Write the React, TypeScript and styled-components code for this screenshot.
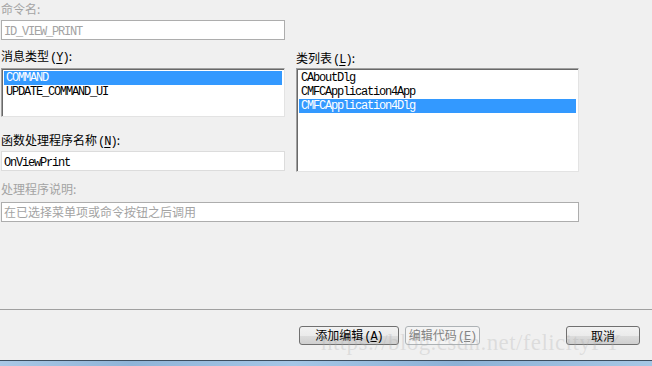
import React from 'react';
import styled, { createGlobalStyle } from 'styled-components';

const GlobalStyle = createGlobalStyle`
  html, body {
    margin: 0;
    padding: 0;
    background: #f0f0f0;
    overflow: hidden;
  }
  #root {
    height: 366px;
  }
`;

const Page = styled.div`
  position: relative;
  height: 366px;
  display: flex;
  flex-direction: column;
  font-family: "Noto Sans CJK SC", "Liberation Sans", sans-serif;
  font-size: 12px;
  color: #000;
`;

const Form = styled.div`
  flex: 1;
  padding-left: 1px;
`;

const Label = styled.div<{ $disabled?: boolean; $top?: number }>`
  height: 18px;
  line-height: 18px;
  margin-top: ${p => p.$top ?? 0}px;
  color: ${p => (p.$disabled ? '#a3a3a3' : '#000')};
  white-space: nowrap;

  u {
    text-decoration: underline;
    text-underline-offset: 2px;
  }
`;

const Mnemonic = styled.span`
  font-family: "Liberation Mono", monospace;
  font-size: 12px;
  letter-spacing: -1px;
  margin-left: 1px;
`;

const Field = styled.div<{ $width: number; $top: number; $disabled?: boolean; $soft?: boolean }>`
  box-sizing: border-box;
  width: ${p => p.$width}px;
  height: 20px;
  margin-top: ${p => p.$top}px;
  background: #fff;
  border: 1px solid ${p => (p.$soft ? '#dcdcdc' : '#adadad')};
  padding-left: 2px;
  line-height: 18px;
  color: ${p => (p.$disabled ? '#a3a3a3' : '#000')};
  white-space: nowrap;
  overflow: hidden;
`;

const MonoText = styled.span`
  font-family: "Liberation Mono", monospace;
  font-size: 12px;
  letter-spacing: -1.2px;
`;

const Columns = styled.div`
  display: grid;
  grid-template-columns: 284px 283px;
  column-gap: 11px;
  align-items: start;
`;

const Column = styled.div`
  display: flex;
  flex-direction: column;
`;

const ListBox = styled.div<{ $height: number; $top: number }>`
  box-sizing: border-box;
  height: ${p => p.$height}px;
  margin-top: ${p => p.$top}px;
  background: #fff;
  border-top: 1px solid #a0a0a0;
  border-left: 1px solid #a0a0a0;
  border-right: 1px solid #e3e3e3;
  border-bottom: 1px solid #e3e3e3;
  box-shadow: inset 1px 1px 0 #696969;
  padding: 2px 2px 1px 2px;
`;

const ListItem = styled.div<{ $selected?: boolean }>`
  height: 14px;
  line-height: 14px;
  padding-left: 2px;
  font-family: "Liberation Mono", monospace;
  font-size: 12px;
  letter-spacing: -1.2px;
  background: ${p => (p.$selected ? '#3399ff' : 'transparent')};
  color: ${p => (p.$selected ? '#fff' : '#000')};
  white-space: nowrap;
`;

const Footer = styled.div`
  border-top: 1px solid #a0a0a0;
  height: 51px;
  box-sizing: border-box;
  display: flex;
  align-items: flex-start;
  gap: 6px;
  padding: 16px 12px 0 299px;
`;

const Button = styled.button<{ $width: number; $push?: boolean }>`
  box-sizing: border-box;
  width: ${p => p.$width}px;
  height: 19px;
  margin-left: ${p => (p.$push ? 'auto' : '0')};
  padding: 0;
  border: 1px solid #707070;
  border-radius: 3px;
  background: linear-gradient(#f2f2f2 0%, #ebebeb 50%, #dddddd 51%, #cfcfcf 100%);
  font-family: "Noto Sans CJK SC", sans-serif;
  font-size: 12px;
  line-height: 16px;
  color: #000;

  &:disabled {
    border-color: #adb2b5;
    background: #f4f4f4;
    color: #838383;
  }
`;

const Taskbar = styled.div`
  height: 6px;
  border-top: 1px solid #3c4e60;
  box-sizing: border-box;
  background: linear-gradient(90deg, #a9c8e6 0%, #8fb4d8 20%, #a4c6e6 45%, #8cb1d6 70%, #a6c7e5 100%);
`;

const Watermark = styled.div`
  position: absolute;
  left: 321px;
  top: 330px;
  font-family: "Liberation Serif", serif;
  font-size: 23px;
  letter-spacing: 0.4px;
  color: rgba(170, 170, 170, 0.28);
  pointer-events: none;
  white-space: nowrap;
`;

const App: React.FC = () => {
  return (
    <Page>
      <GlobalStyle />
      <Form>
        <Label $disabled>命令名:</Label>
        <Field $width={284} $top={2} $disabled>
          <MonoText>ID_VIEW_PRINT</MonoText>
        </Field>
        <Columns>
          <Column>
            <Label $top={7}>
              消息类型<Mnemonic>(<u>Y</u>)</Mnemonic>:
            </Label>
            <ListBox $height={49} $top={3}>
              <ListItem $selected>COMMAND</ListItem>
              <ListItem>UPDATE_COMMAND_UI</ListItem>
            </ListBox>
            <Label $top={14}>
              函数处理程序名称<Mnemonic>(<u>N</u>)</Mnemonic>:
            </Label>
            <Field $width={284} $top={2} $soft>
              <MonoText>OnViewPrint</MonoText>
            </Field>
          </Column>
          <Column>
            <Label $top={9}>
              类列表<Mnemonic>(<u>L</u>)</Mnemonic>:
            </Label>
            <ListBox $height={104} $top={1}>
              <ListItem>CAboutDlg</ListItem>
              <ListItem>CMFCApplication4App</ListItem>
              <ListItem $selected>CMFCApplication4Dlg</ListItem>
            </ListBox>
          </Column>
        </Columns>
        <Label $disabled $top={8}>处理程序说明:</Label>
        <Field $width={578} $top={4} $disabled>
          在已选择菜单项或命令按钮之后调用
        </Field>
      </Form>
      <Footer>
        <Button $width={100}>
          添加编辑<Mnemonic>(<u>A</u>)</Mnemonic>
        </Button>
        <Button $width={75} disabled>
          编辑代码<Mnemonic>(<u>E</u>)</Mnemonic>
        </Button>
        <Button $width={74} $push>
          取消
        </Button>
      </Footer>
      <Taskbar />
      <Watermark>https://blog.csdn.net/felicityPY</Watermark>
    </Page>
  );
};

export default App;
